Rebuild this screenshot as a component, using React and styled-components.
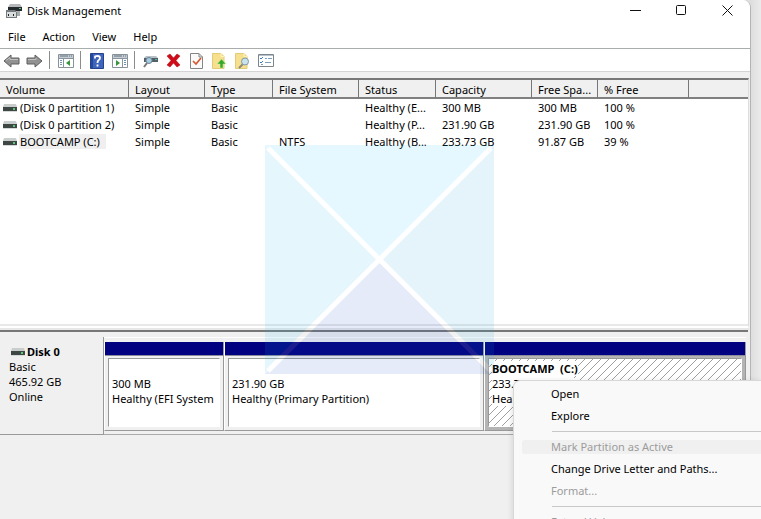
import React from 'react';
import styled, { createGlobalStyle } from 'styled-components';

const GlobalStyle = createGlobalStyle`
  * {
    box-sizing: border-box;
  }

  html, body {
    margin: 0;
    height: 100%;
    overflow: hidden;
  }

  body, button, table {
    font-family: 'Noto Sans', sans-serif;
    font-size: 11px;
    line-height: 15px;
    color: #000;
  }
`;

const Desktop = styled.div`
  position: relative;
  height: 100vh;
  display: flex;
  padding-right: 10px;
  overflow: hidden;
  background: linear-gradient(to right, #dedede calc(100% - 10px), #ebebeb 100%);
`;

const Window = styled.main`
  flex: 1;
  min-width: 0;
  display: flex;
  flex-direction: column;
  background: #f0f0f0;
  border-right: 1px solid #b4b4b4;
  border-top-right-radius: 8px;
  overflow: hidden;
`;

const TitleBar = styled.header`
  display: flex;
  align-items: center;
  height: 21px;
  padding-left: 6px;
  background: #fff;
`;

const Title = styled.h1`
  flex: 1;
  margin: 0 0 0 5px;
  font-size: 11px;
  font-weight: 400;
`;

const WindowButton = styled.button`
  display: flex;
  justify-content: center;
  align-items: center;
  width: 46px;
  height: 20px;
  padding: 0;
  border: none;
  background: transparent;
`;

const MenuBar = styled.nav`
  display: flex;
  gap: 17px;
  height: 28px;
  padding: 0 8px;
  background: #fff;
  border-bottom: 1px solid #a9adad;
`;

const MenuButton = styled.button`
  padding: 4px 0 0;
  border: none;
  background: transparent;
`;

const ToolBar = styled.div`
  display: flex;
  align-items: center;
  height: 23px;
  background: #fff;
  border-bottom: 1px solid #d4d4d4;
`;

const ToolButton = styled.button`
  display: flex;
  justify-content: center;
  width: 23px;
  padding: 1px 0 0;
  border: none;
  background: transparent;
`;

const Divider = styled.span`
  width: 1px;
  height: 18px;
  margin: 0 4px 0 3px;
  background: #8c8c8c;
`;

const ListPane = styled.section`
  height: 252px;
  margin: 6px 1px 0 0;
  background: #fff;
  border-top: 2px solid #777;
  border-right: 1px solid #ddd;
  border-bottom: 6px double #e8e8e8;
  overflow: hidden;
`;

const VolumeTable = styled.table`
  width: 100%;
  table-layout: fixed;
  border-collapse: separate;
  border-spacing: 0;
`;

const HeaderCell = styled.th`
  height: 19px;
  padding: 2px 4px 0 6px;
  font-weight: 400;
  text-align: left;
  white-space: nowrap;
  background: #f0f0f0;
  border-right: 1px solid #777;
  border-bottom: 2px solid #808080;

  &:last-child {
    border-right: none;
  }
`;

const Cell = styled.td`
  height: 17px;
  padding: 1px 0 1px 6px;
  white-space: nowrap;
`;

const VolumeName = styled.div`
  display: flex;
  align-items: center;
  gap: 2px;
  margin-left: -3px;
`;

const VolumeLabel = styled.span`
  padding: 0 6px 0 1px;
  background: ${(props) => (props.$selected ? '#efefef' : 'transparent')};
`;

const Splitter = styled.div`
  height: 7px;
  margin-right: 2px;
  border-top: 2px solid #777;
`;

const DiskRow = styled.section`
  display: flex;
  height: 98px;
  margin-right: 4px;
`;

const DiskInfo = styled.div`
  width: 104px;
  padding: 7px 0 0 9px;
  border-right: 1px solid #999;
  border-bottom: 1px solid #999;
`;

const DiskName = styled.div`
  display: flex;
  align-items: center;
  gap: 2px;
  padding-left: 2px;
  font-weight: 700;
`;

const Partitions = styled.div`
  flex: 1;
  min-width: 0;
  display: grid;
  grid-template-columns: 120fr 260fr 262fr;
  padding: 4px 0 3px;
  border-top: 1px solid #fff;
  border-bottom: 1px solid #aaa;
`;

const Partition = styled.div`
  min-width: 0;
  display: flex;
  flex-direction: column;
  border-left: 1px solid #fff;
  border-right: 1px solid #999;
  border-bottom: 1px solid #999;
`;

const PartitionBar = styled.div`
  height: 14px;
  background: #000080;
  border-bottom: 1px solid #8c8c9c;
`;

const PartitionFrame = styled.div`
  flex: 1;
  display: flex;
  padding: 2px 3px 3px;
  background: ${(props) => (props.$selected ? '#b4b4b4' : '#f0f0f0')};
`;

const PartitionBody = styled.div`
  flex: 1;
  min-width: 0;
  padding: 2px 0 3px 3px;
  overflow: hidden;
  white-space: pre;
  border: 1px solid #999;
  border-right-color: #fff;
  border-bottom-color: #fff;
  background-color: #fff;
  background-size: 8px 8px;
  background-image: ${(props) =>
    props.$selected
      ? 'linear-gradient(135deg, transparent 45%, #a0a0a0 46%, #a0a0a0 53%, transparent 54%)'
      : 'none'};
`;

const PartitionLine = styled.div`
  width: fit-content;
  height: 15px;
  background: #fff;
  font-weight: ${(props) => (props.$bold ? 700 : 400)};
`;

const ContextMenu = styled.div`
  position: absolute;
  left: 513px;
  right: 0;
  top: 380px;
  display: flex;
  flex-direction: column;
  padding: 2px 0 2px 8px;
  background: #f9f9f9;
  border: 1px solid #d8d8d8;
  border-right: none;
  border-radius: 7px 0 0 7px;
  box-shadow: 0 2px 6px rgba(0, 0, 0, 0.15);
`;

const ContextItem = styled.button`
  height: 14px;
  margin: 4px 0;
  padding: 0 0 0 29px;
  line-height: 14px;
  text-align: left;
  white-space: nowrap;
  border: none;
  border-radius: 3px 0 0 3px;
  background: ${(props) => (props.$active ? '#f0f0f0' : 'transparent')};

  &:disabled {
    color: #9c9c9c;
  }
`;

const ContextLine = styled.hr`
  align-self: stretch;
  height: 1px;
  margin: 4px 0 4px 30px;
  border: none;
  background: #c8c8c8;
`;

const Watermark = styled.svg`
  position: absolute;
  left: 265px;
  top: 145px;
  opacity: 0.11;
  pointer-events: none;
`;

const DriveIcon = () => (
  <svg width="14" height="8" viewBox="0 0 14 8" aria-hidden="true">
    <path d="M1 0h12l1 3H0z" fill="#c9cdcb" />
    <path d="M0 3h14v4H0z" fill="#3e4743" />
    <path d="M10 4h2v2h-2z" fill="#58c878" />
    <path d="M0 7h14v1H0z" fill="#d5dad7" />
  </svg>
);

const AppIcon = () => (
  <svg width="16" height="16" viewBox="0 0 16 16" aria-hidden="true">
    <path d="M4 1h10l2 3H2z" fill="#b5b9ba" />
    <path d="M2 4h14v4H2z" fill="#252b2c" />
    <path d="M13 5h2v1h-2z" fill="#59bd91" />
    <path d="M0 7h9l2 2v6H0z" fill="#747a7d" />
    <path d="M1 9h9v5H1z" fill="#d9dddd" />
    <path d="M2 11h1v2H2zM7 11h1v2H7z" fill="#222" />
    <path d="M11 8h3v5h-3z" fill="#a7acad" />
  </svg>
);

const Arrow = ({ right }) => (
  <svg width="17" height="16" viewBox="0 0 17 16" aria-hidden="true">
    <path
      d="M1 8l7-6v3h8v6H8v3z"
      transform={right ? 'rotate(180 8.5 8)' : undefined}
      fill="#929292"
      stroke="#5e5e5e"
    />
    <path d={right ? 'M2 6.5h8V5' : 'M3 7.5l4-3v2h8'} fill="none" stroke="#c0c0c0" />
  </svg>
);

const PaneIcon = ({ right }) => (
  <svg width="16" height="14" viewBox="0 0 16 14" aria-hidden="true">
    <path d="M.5.5h15v13H.5z" fill="#fff" stroke="#899199" />
    <path d="M1 1h14v3H1z" fill="#c4cdd6" />
    <path d="M2 2h8M11 2h1M13 2h1" stroke="#65717d" />
    <path d="M1 4.5h14" stroke="#8a949d" />
    <path d={right ? 'M10.5 5v8' : 'M5.500 5v8'} stroke="#8a949d" />
    <path
      d={right ? 'M12 6.5h2M12 8.5h2M12 10.5h2' : 'M2 6.5h2M2 8.5h2M2 10.5h2'}
      stroke="#6e93b5"
    />
    <path d={right ? 'M4 6l4 3-4 3z' : 'M12 6L8 9l4 3z'} fill="#38953a" />
  </svg>
);

const HelpIcon = () => (
  <svg width="14" height="16" viewBox="0 0 14 16" aria-hidden="true">
    <path d="M.5.5h13v15H.5z" fill="#3f65bd" stroke="#264489" />
    <path d="M1 1h2v14H1z" fill="#24499d" />
    <path d="M5 5.5V4q0-1 2.500-1T10 5q0 1.500-1.500 2.300Q7.500 8 7.500 10M7.500 11.500v2" fill="none" stroke="#fff" strokeWidth="1.800" />
  </svg>
);

const RescanIcon = () => (
  <svg width="16" height="14" viewBox="0 0 16 14" aria-hidden="true">
    <path d="M3 2h10l2 2H1z" fill="#b6c0c5" />
    <path d="M1 4h14v4H1z" fill="#526066" />
    <path d="M12 5h2v1h-2z" fill="#42c0a0" />
    <circle cx="6" cy="6.500" r="3" fill="#a7cbe2" stroke="#6c8596" />
    <path d="M4 9l-3 4" stroke="#777" strokeWidth="2" />
  </svg>
);

const DeleteIcon = () => (
  <svg width="15" height="15" viewBox="0 0 15 15" aria-hidden="true">
    <path d="M1 3l3-2 3.500 4L11 1l3 2-4 4.500 4 4.500-3 2-3.500-4L4 14l-3-2 4-4.500z" fill="#cf0d18" stroke="#a6000a" strokeWidth=".5" />
  </svg>
);

const CheckPageIcon = () => (
  <svg width="13" height="16" viewBox="0 0 13 16" aria-hidden="true">
    <path d="M.5.5h8.500l3.500 3.500v11.500H.5z" fill="#fafafa" stroke="#858585" />
    <path d="M9 .5V4h3.500" fill="none" stroke="#858585" />
    <path d="M3 8l3 3 5-6" fill="none" stroke="#d65932" strokeWidth="1.700" />
  </svg>
);

const FolderIcon = ({ search }) => (
  <svg width="15" height="16" viewBox="0 0 15 16" aria-hidden="true">
    <path d="M.5.5h8.500l3 3v12H.5z" fill="#f6e08e" stroke="#e3ca78" />
    <path d="M9 .5v3h3" fill="none" stroke="#fff3ba" />
    {search ? (
      <>
        <path d="M8 11l-4 4" stroke="#8d8a7b" strokeWidth="2" />
        <circle cx="10" cy="8.500" r="3.500" fill="#c9e3ed" stroke="#8198a5" />
      </>
    ) : (
      <path d="M9.500 6l4.500 5h-3v4H8v-4H5z" fill="#39a92d" stroke="#d4f2a7" strokeWidth=".5" />
    )}
  </svg>
);

const ListIcon = () => (
  <svg width="16" height="13" viewBox="0 0 16 13" aria-hidden="true">
    <path d="M.5.5h15v12H.5z" fill="#fff" stroke="#7d858c" />
    <path d="M1 1.500h14" stroke="#b5c0cc" />
    <path d="M2 4l1 1 2-2M2 8l1 1 2-2" fill="none" stroke="#3979bc" />
    <path d="M7 4.500h2M10 4.500h4M7 8.500h6M3 10.500h2" stroke="#7ba0bf" />
  </svg>
);

const columns = [
  { label: 'Volume', width: 129 },
  { label: 'Layout', width: 76 },
  { label: 'Type', width: 68 },
  { label: 'File System', width: 86 },
  { label: 'Status', width: 77 },
  { label: 'Capacity', width: 96 },
  { label: 'Free Spa...', width: 66 },
  { label: '% Free', width: 91 },
  { label: '' },
];

const volumes = [
  ['(Disk 0 partition 1)', 'Simple', 'Basic', '', 'Healthy (E...', '300 MB', '300 MB', '100 %'],
  ['(Disk 0 partition 2)', 'Simple', 'Basic', '', 'Healthy (P...', '231.90 GB', '231.90 GB', '100 %'],
  ['BOOTCAMP (C:)', 'Simple', 'Basic', 'NTFS', 'Healthy (B...', '233.73 GB', '91.87 GB', '39 %'],
];

const partitions = [
  { name: '', size: '300 MB', status: 'Healthy (EFI System' },
  { name: '', size: '231.90 GB', status: 'Healthy (Primary Partition)' },
  { name: 'BOOTCAMP  (C:)', size: '233.73 GB NTFS', status: 'Healthy', selected: true },
];

const App = () => {
  return (
    <>
      <GlobalStyle />
      <Desktop>
        <Window>
          <TitleBar>
            <AppIcon />
            <Title>Disk Management</Title>
            <WindowButton aria-label="Minimize">
              <svg width="11" height="11"><path d="M0 5.500h11" stroke="#111" /></svg>
            </WindowButton>
            <WindowButton aria-label="Maximize">
              <svg width="11" height="11"><rect x=".5" y=".5" width="9" height="9" rx="1" fill="none" stroke="#111" /></svg>
            </WindowButton>
            <WindowButton aria-label="Close">
              <svg width="11" height="11"><path d="M.5.5l10 10M10.500.5l-10 10" stroke="#111" /></svg>
            </WindowButton>
          </TitleBar>

          <MenuBar>
            {['File', 'Action', 'View', 'Help'].map((item) => (
              <MenuButton key={item}>{item}</MenuButton>
            ))}
          </MenuBar>

          <ToolBar>
            <ToolButton aria-label="Back"><Arrow /></ToolButton>
            <ToolButton aria-label="Forward"><Arrow right /></ToolButton>
            <Divider />
            <ToolButton aria-label="Show console tree"><PaneIcon /></ToolButton>
            <Divider />
            <ToolButton aria-label="Help"><HelpIcon /></ToolButton>
            <ToolButton aria-label="Show action pane"><PaneIcon right /></ToolButton>
            <Divider />
            <ToolButton aria-label="Rescan"><RescanIcon /></ToolButton>
            <ToolButton aria-label="Delete"><DeleteIcon /></ToolButton>
            <ToolButton aria-label="Properties"><CheckPageIcon /></ToolButton>
            <ToolButton aria-label="Open"><FolderIcon /></ToolButton>
            <ToolButton aria-label="Explore"><FolderIcon search /></ToolButton>
            <ToolButton aria-label="Settings"><ListIcon /></ToolButton>
          </ToolBar>

          <ListPane>
            <VolumeTable>
              <colgroup>
                {columns.map((col) => (
                  <col key={col.label} width={col.width} />
                ))}
              </colgroup>
              <thead>
                <tr>
                  {columns.map((col) => (
                    <HeaderCell key={col.label}>{col.label}</HeaderCell>
                  ))}
                </tr>
              </thead>
              <tbody>
                {volumes.map(([name, ...rest], row) => (
                  <tr key={name}>
                    <Cell>
                      <VolumeName>
                        <DriveIcon />
                        <VolumeLabel $selected={row === 2}>{name}</VolumeLabel>
                      </VolumeName>
                    </Cell>
                    {rest.map((value, i) => (
                      <Cell key={i}>{value}</Cell>
                    ))}
                  </tr>
                ))}
              </tbody>
            </VolumeTable>
          </ListPane>

          <Splitter />

          <DiskRow>
            <DiskInfo>
              <DiskName><DriveIcon />Disk 0</DiskName>
              <div>Basic</div>
              <div>465.92 GB</div>
              <div>Online</div>
            </DiskInfo>
            <Partitions>
              {partitions.map((part) => (
                <Partition key={part.size}>
                  <PartitionBar />
                  <PartitionFrame $selected={part.selected}>
                    <PartitionBody $selected={part.selected}>
                      <PartitionLine $bold>{part.name}</PartitionLine>
                      <PartitionLine>{part.size}</PartitionLine>
                      <PartitionLine>{part.status}</PartitionLine>
                    </PartitionBody>
                  </PartitionFrame>
                </Partition>
              ))}
            </Partitions>
          </DiskRow>
        </Window>

        <Watermark width="229" height="229" viewBox="0 0 229 229" aria-hidden="true">
          <path d="M0 0h229L115 115z" fill="#22c5ff" />
          <path d="M0 0l115 115L0 229z" fill="#22b8f0" />
          <path d="M229 0v229L115 115z" fill="#22a5e0" />
          <path d="M0 229l115-114 114 114z" fill="#1e50c5" />
          <path d="M3 3l223 223M226 3L3 226" stroke="#fff" strokeWidth="5" />
        </Watermark>

        <ContextMenu>
          <ContextItem>Open</ContextItem>
          <ContextItem>Explore</ContextItem>
          <ContextLine />
          <ContextItem disabled $active>Mark Partition as Active</ContextItem>
          <ContextItem>Change Drive Letter and Paths...</ContextItem>
          <ContextItem disabled>Format...</ContextItem>
          <ContextLine />
          <ContextItem disabled>Extend Volume...</ContextItem>
        </ContextMenu>
      </Desktop>
    </>
  );
};

export default App;
